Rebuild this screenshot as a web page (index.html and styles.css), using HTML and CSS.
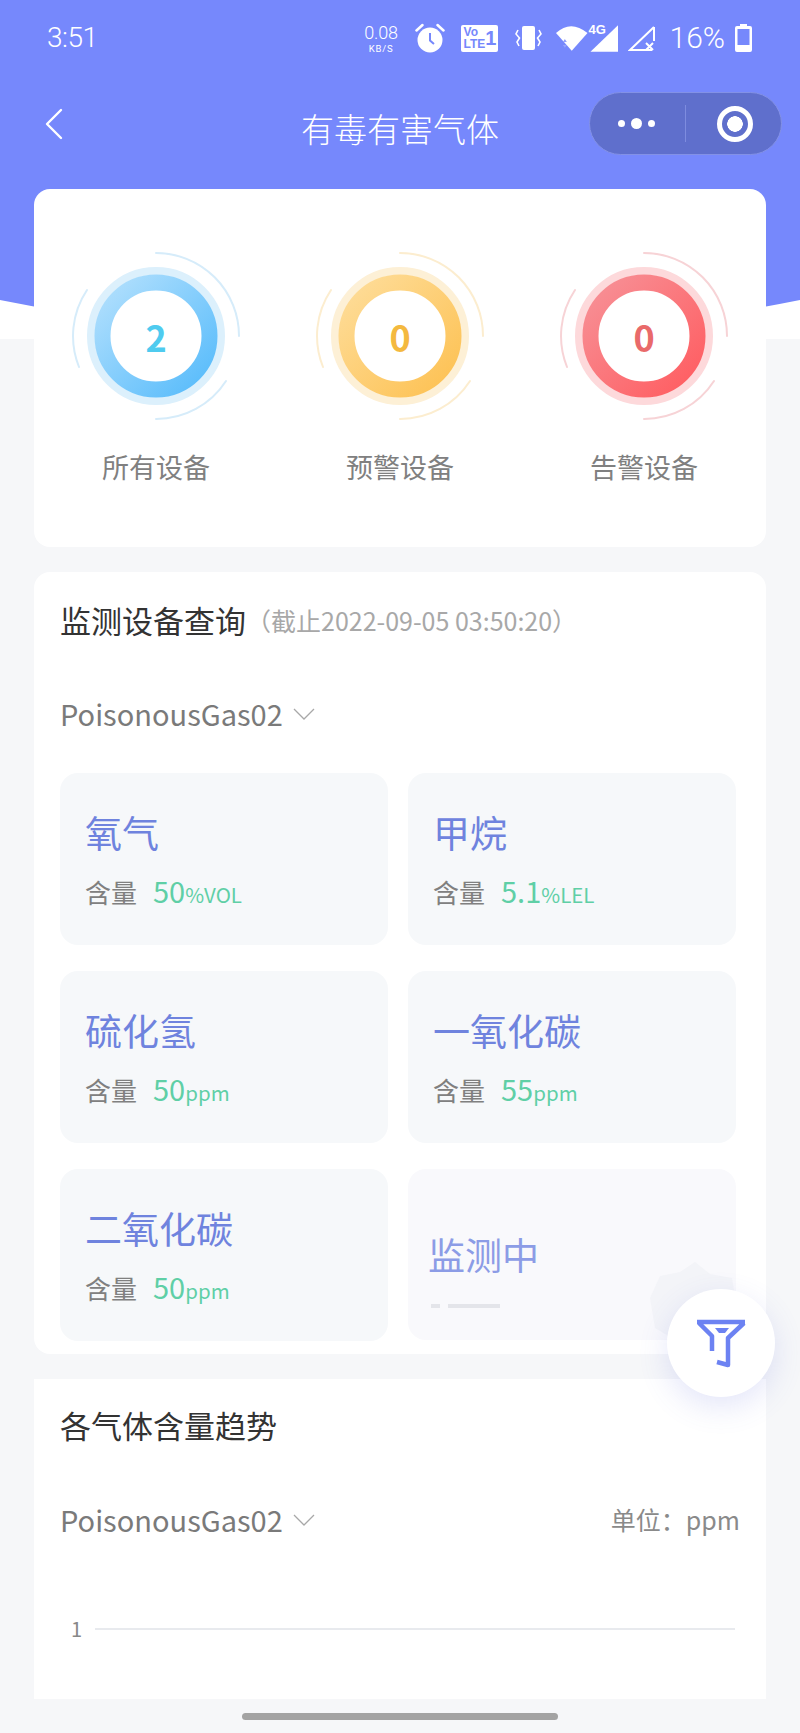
FILE: index.html
```html
<!DOCTYPE html>
<html lang="zh-CN">
<head>
<meta charset="utf-8">
<title>有毒有害气体</title>
<link rel="stylesheet" href="styles.css">
</head>
<body>
<div class="page">
  <header class="hero">
    <svg class="hero-bg" viewBox="0 0 800 339" preserveAspectRatio="none"><path d="M0 0H800V300Q400 380 0 300Z"/></svg>
    <div class="status">
      <span class="time">3:51</span>
      <div class="status-right">
        <span class="speed"><b>0.08</b><i>KB/S</i></span>
        <svg class="ic-alarm" viewBox="0 0 30 30"><circle cx="15" cy="17" r="12.5" fill="#fff"/><path d="M15 10v7.5l4 3.5" fill="none" stroke="#7688fc" stroke-width="2"/><path d="M1.500 7.500 7.500 2M28.500 7.500 22.500 2" stroke="#fff" stroke-width="2.500" stroke-linecap="round"/></svg>
        <span class="volte"><span class="volte-t">Vo<br>LTE</span><span class="volte-n">1</span></span>
        <svg class="ic-vib" viewBox="0 0 27 24"><rect x="7" y="0" width="13" height="24" rx="2" fill="#fff"/><path d="M3 4 1 8l3.500 4L2 16l2 4M24 4l2 4-3.500 4 2.500 4-2 4" fill="none" stroke="#fff" stroke-width="1.600"/></svg>
        <span class="wifi-wrap">
          <svg class="ic-sig" viewBox="0 0 64 28"><path d="M0 9Q15-5 32 9L16 27Z" fill="#fff"/><path d="M7 18l2-3 2 3zM7 21l2 3 2-3z" fill="#94a2fb"/><path d="M63 1V28H35Z" fill="#fff"/></svg>
          <span class="fourg">4G</span>
        </span>
        <svg class="ic-nosig" viewBox="0 0 28 28"><path d="M26 3V17M24 26H2L26 3" fill="none" stroke="#fff" stroke-width="2"/><path d="M18 19l7 7M25 19l-7 7" stroke="#fff" stroke-width="2"/></svg>
        <span class="batt-text">16%</span>
        <svg class="ic-batt" viewBox="0 0 17 28"><path d="M5 0h7v2h3a2 2 0 0 1 2 2v22a2 2 0 0 1-2 2H2a2 2 0 0 1-2-2V4a2 2 0 0 1 2-2h3Z" fill="#fff"/><rect x="2.500" y="5" width="12" height="16" fill="#7688fc"/></svg>
      </div>
    </div>
    <nav class="nav">
      <svg class="back" viewBox="0 0 18 32"><path d="M16 2 2 16l14 14" fill="none" stroke="#fff" stroke-width="2.400" stroke-linecap="round" stroke-linejoin="round"/></svg>
      <h1 class="nav-title">有毒有害气体</h1>
      <div class="capsule">
        <span class="dots"><i></i><i class="big"></i><i></i></span>
        <span class="cap-div"></span>
        <span class="target"></span>
      </div>
    </nav>
  </header>

  <main class="content">
    <section class="card stats">
      <div class="stat stat-blue">
        <div class="gauge">
          <svg viewBox="-90 -90 180 180"><defs><linearGradient id="gb" x1="0" y1="0" x2="1" y2="1"><stop offset="0" stop-color="#b3e0fd"/><stop offset="1" stop-color="#56bbfb"/></linearGradient></defs>
            <circle class="halo" r="65"/><circle r="53.500" class="ring" stroke="url(#gb)"/>
            <path class="arc" d="M0 -83A83 83 0 0 1 83 0M70 45A83 83 0 0 1 0 83M-77 31A83 83 0 0 1 -69 -46"/></svg>
          <span class="num">2</span>
        </div>
        <p class="stat-label">所有设备</p>
      </div>
      <div class="stat stat-orange">
        <div class="gauge">
          <svg viewBox="-90 -90 180 180"><defs><linearGradient id="go" x1="0" y1="0" x2="1" y2="1"><stop offset="0" stop-color="#fedd9a"/><stop offset="1" stop-color="#fdc152"/></linearGradient></defs>
            <circle class="halo" r="65"/><circle r="53.500" class="ring" stroke="url(#go)"/>
            <path class="arc" d="M0 -83A83 83 0 0 1 83 0M70 45A83 83 0 0 1 0 83M-77 31A83 83 0 0 1 -69 -46"/></svg>
          <span class="num">0</span>
        </div>
        <p class="stat-label">预警设备</p>
      </div>
      <div class="stat stat-red">
        <div class="gauge">
          <svg viewBox="-90 -90 180 180"><defs><linearGradient id="gr" x1="0" y1="0" x2="1" y2="1"><stop offset="0" stop-color="#f79197"/><stop offset="1" stop-color="#ff5c60"/></linearGradient></defs>
            <circle class="halo" r="65"/><circle r="53.500" class="ring" stroke="url(#gr)"/>
            <path class="arc" d="M0 -83A83 83 0 0 1 83 0M70 45A83 83 0 0 1 0 83M-77 31A83 83 0 0 1 -69 -46"/></svg>
          <span class="num">0</span>
        </div>
        <p class="stat-label">告警设备</p>
      </div>
    </section>

    <section class="card query">
      <div class="sec-head"><h2 class="sec-title">监测设备查询</h2><span class="sec-sub">（截止2022-09-05 03:50:20）</span></div>
      <div class="select select-first"><span>PoisonousGas02</span><svg class="chev" viewBox="0 0 22 13"><path d="M1 1l10 10L21 1"/></svg></div>
      <div class="tiles">
        <article class="tile"><h3 class="tile-name">氧气</h3><p class="tile-row"><span class="tile-key">含量</span><span class="tile-val">50<small>%VOL</small></span></p></article>
        <article class="tile"><h3 class="tile-name">甲烷</h3><p class="tile-row"><span class="tile-key">含量</span><span class="tile-val">5.1<small>%LEL</small></span></p></article>
        <article class="tile"><h3 class="tile-name">硫化氢</h3><p class="tile-row"><span class="tile-key">含量</span><span class="tile-val">50<small>ppm</small></span></p></article>
        <article class="tile"><h3 class="tile-name">一氧化碳</h3><p class="tile-row"><span class="tile-key">含量</span><span class="tile-val">55<small>ppm</small></span></p></article>
        <article class="tile"><h3 class="tile-name">二氧化碳</h3><p class="tile-row"><span class="tile-key">含量</span><span class="tile-val">50<small>ppm</small></span></p></article>
        <article class="tile tile-loading"><h3 class="tile-name">监测中</h3><div class="skeleton"><i></i><i class="long"></i></div></article>
      </div>
    </section>

    <section class="card trend">
      <h2 class="sec-title">各气体含量趋势</h2>
      <div class="trend-row">
        <div class="select"><span>PoisonousGas02</span><svg class="chev" viewBox="0 0 22 13"><path d="M1 1l10 10L21 1"/></svg></div>
        <span class="unit">单位：ppm</span>
      </div>
      <div class="chart"><span class="tick">1</span><span class="gridline"></span></div>
    </section>
  </main>

  <button class="fab" type="button" aria-label="筛选">
    <svg class="fab-blob" viewBox="0 0 90 90"><path d="M45 0l15 12 22 4 4 24-4 30-37 20L5 66 0 36l10-22 20-4Z"/></svg>
    <span class="fab-disc">
      <svg class="fab-icon" viewBox="0 0 50 50"><path d="M0 3h48M2 4 15 17V32M47 4 31 19V46L20 43" fill="none" stroke="#6c82f2" stroke-width="4.500" stroke-linejoin="round"/><path d="M18 9H32L28 14H22Z" fill="#6c82f2"/></svg>
    </span>
  </button>
  <div class="home-bar"></div>
</div>
</body>
</html>
```

FILE: styles.css
```css
* { box-sizing: border-box; }
html, body { margin: 0; padding: 0; }
body {
  background: #f6f7f9;
  font-family: "Noto Sans CJK SC", "Noto Sans", sans-serif;
}
h1, h2, h3, p { margin: 0; font-weight: 400; }
.page { position: relative; width: 800px; height: 1733px; overflow: hidden; }

/* header */
.hero { position: relative; height: 339px; margin-bottom: -150px; background: #fff; color: #fff; }
.hero-bg { position: absolute; inset: 0; width: 100%; height: 100%; fill: #7688fc; }
.status { position: relative; height: 76px; padding: 22px 48px 0 47px; display: flex; justify-content: space-between; align-items: flex-start; }
.time { font: 300 28px/32px Roboto, sans-serif; letter-spacing: -.5px; }
.status-right { display: flex; align-items: flex-start; height: 32px; }
.speed { display: flex; flex-direction: column; align-items: center; width: 37px; margin-right: 15px; font-family: Roboto, sans-serif; }
.speed b { font-weight: 300; font-size: 18px; line-height: 21px; letter-spacing: -.2px; }
.speed i { font-style: normal; font-size: 9.500px; line-height: 11px; letter-spacing: .8px; }
.ic-alarm { width: 30px; height: 30px; margin-top: 1px; margin-right: 16px; }
.volte { position: relative; display: flex; width: 37px; height: 27px; margin-top: 3px; margin-right: 17px; background: #fff; border-radius: 2px; color: #7688fc; font: 700 12px/12px "Liberation Sans", sans-serif; padding: 1px 0 0 3px; }
.volte-t { flex: 1; }
.volte-n { font-size: 20px; line-height: 24px; padding-right: 2px; }
.ic-vib { width: 27px; height: 24px; margin-top: 4px; margin-right: 14px; }
.wifi-wrap { position: relative; width: 63px; height: 28px; margin-top: 2px; margin-right: 9px; }
.ic-sig { display: block; width: 63px; height: 28px; }
.fourg { position: absolute; left: 33px; top: -1px; font: 700 13px/13px "Liberation Sans", sans-serif; }
.ic-nosig { width: 28px; height: 28px; margin-top: 2px; margin-right: 14px; }
.batt-text { font: 300 30px/32px Roboto, sans-serif; margin-right: 10px; }
.ic-batt { width: 17px; height: 28px; margin-top: 2px; }

.nav { position: relative; height: 80px; }
.back { position: absolute; left: 45px; top: 32px; width: 18px; height: 32px; }
.nav-title { position: absolute; left: 0; right: 0; top: 26px; text-align: center; font-size: 33px; line-height: 52px; font-weight: 300; }
.capsule { position: absolute; left: 589px; top: 16px; width: 193px; height: 63px; display: flex; align-items: center; border-radius: 32px; background: #5f6fcc; border: 1px solid #8391e6; }
.dots { display: flex; align-items: center; gap: 6px; margin-left: 28px; width: 39px; }
.dots i { width: 7px; height: 7px; border-radius: 50%; background: #fff; }
.dots i.big { width: 11px; height: 11px; }
.cap-div { width: 1px; height: 37px; margin-left: 28px; background: #7e8cdf; }
.target { width: 36px; height: 36px; margin-left: 31px; border: 5px solid #fff; border-radius: 50%; background: radial-gradient(circle, #fff 0 7.500px, transparent 8px); }

/* cards */
.content { position: relative; display: flex; flex-direction: column; gap: 25px; padding: 0 34px; }
.card { background: #fff; border-radius: 16px; }

.stats { display: grid; grid-template-columns: repeat(3, 1fr); height: 358px; padding-top: 57px; }
.stat { display: flex; flex-direction: column; align-items: center; }
.gauge { position: relative; width: 180px; height: 180px; display: flex; align-items: center; justify-content: center; }
.gauge svg { position: absolute; inset: 0; width: 180px; height: 180px; }
.halo { fill: none; stroke-width: 8; }
.ring { fill: none; stroke-width: 16; }
.arc { fill: none; stroke-width: 2; stroke-linecap: round; }
.num { position: relative; font-size: 36px; line-height: 44px; font-weight: 700; }
.stat-label { margin-top: 15px; font-size: 27px; line-height: 52px; color: #808080; }
.stat-blue .halo { stroke: #dcf0fc; } .stat-blue .arc { stroke: #d6ecfa; } .stat-blue .num { color: #4fcbef; }
.stat-orange .halo { stroke: #fdf0d6; } .stat-orange .arc { stroke: #fcedcf; } .stat-orange .num { color: #f4b93f; }
.stat-red .halo { stroke: #fdd9db; } .stat-red .arc { stroke: #f7d3d6; } .stat-red .num { color: #e96a6a; }

.query { height: 782px; padding: 24px 30px 14px 26px; }
.sec-head { display: flex; align-items: center; height: 48px; }
.sec-title { font-size: 31px; line-height: 48px; color: #333; }
.sec-sub { font-size: 25px; line-height: 48px; color: #a8a8a8; }
.select { display: flex; align-items: center; height: 48px; font-size: 29px; color: #7a7a7a; }
.select span { position: relative; top: -3px; }
.chev { position: relative; top: -3px; width: 22px; height: 13px; margin-left: 10px; margin-top: 2px; fill: none; stroke: #a8a8a8; stroke-width: 1.300; }
.select-first { margin-top: 48px; }

.tiles { display: grid; grid-template-columns: 328px 328px; gap: 26px 20px; margin-top: 33px; }
.tile { height: 172px; padding: 34px 25px 0; background: #f6f8fa; border-radius: 18px; }
.tile-name { font-size: 37px; line-height: 50px; color: #6f83de; }
.tile-row { display: flex; align-items: baseline; margin-top: 15px; height: 36px; line-height: 36px; }
.tile-key { font-size: 26px; color: #808080; margin-right: 16px; }
.tile-val { font-size: 29px; color: #5fcfa6; }
.tile-val small { font-size: 20.500px; }
.tile-loading { height: 171px; padding: 60px 20px 0; background: #f9f9fc; }
.tile-loading .tile-name { color: #8c9ce6; }
.skeleton { display: flex; gap: 8px; margin-top: 25px; padding-left: 3px; }
.skeleton i { width: 9px; height: 4px; background: #e4e5ea; }
.skeleton i.long { width: 52px; }

.trend { height: 320px; padding: 22px 26px 0; border-radius: 0; }
.trend-row { display: flex; justify-content: space-between; align-items: center; margin-top: 49px; }
.unit { position: relative; top: -3px; font-size: 25px; line-height: 48px; color: #8a8a8a; margin-right: 0; }
.chart { display: flex; align-items: center; gap: 13px; height: 24px; margin-top: 71px; padding-left: 11px; }
.tick { font-size: 20px; line-height: 24px; color: #888; }
.gridline { width: 640px; height: 2px; background: #e8eaee; }

/* overlays */
.fab { position: absolute; left: 667px; top: 1289px; width: 108px; height: 108px; padding: 0; border: 0; background: none; }
.fab-blob { position: absolute; left: -17px; top: -27px; width: 90px; height: 90px; fill: #f3f4f8; }
.fab-disc { position: absolute; inset: 0; display: flex; align-items: center; justify-content: center; background: #fff; border-radius: 50%; box-shadow: 0 10px 30px rgba(90, 100, 220, .16); }
.fab-icon { width: 50px; height: 50px; margin-left: 2px; margin-top: 2px; }
.home-bar { position: absolute; left: 242px; top: 1713px; width: 316px; height: 7px; border-radius: 4px; background: #a3a3a3; }
```
